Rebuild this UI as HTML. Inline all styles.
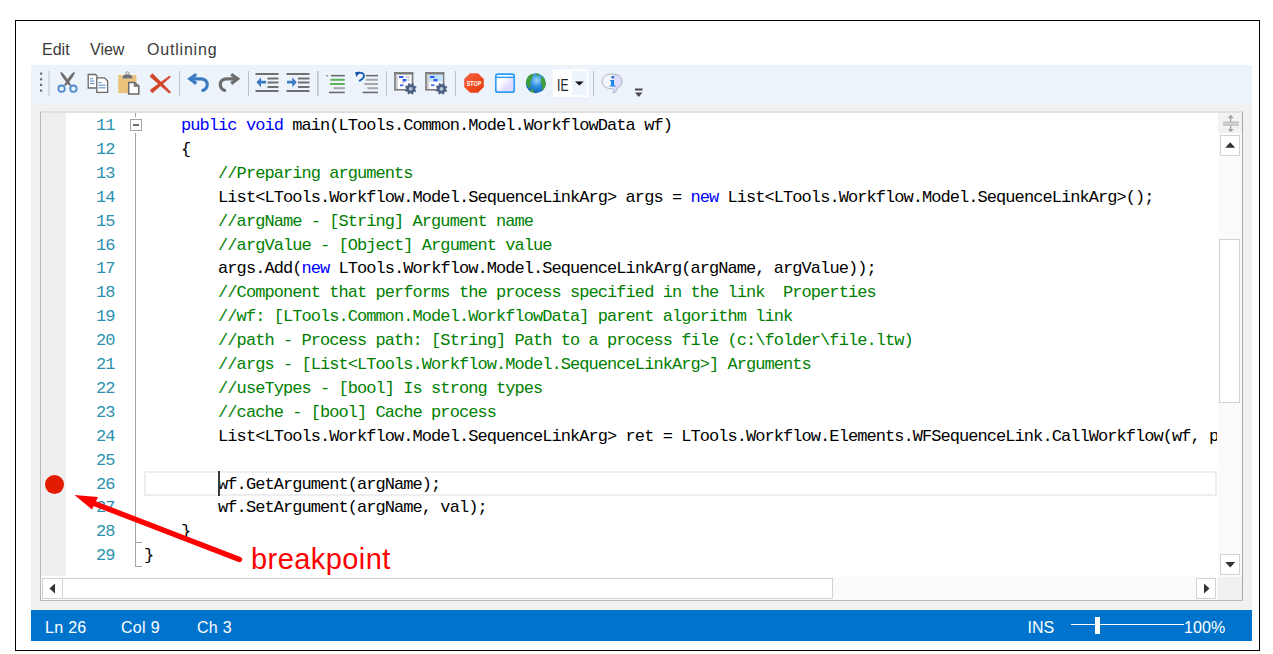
<!DOCTYPE html>
<html><head><meta charset="utf-8">
<style>
html,body{margin:0;padding:0;background:#fff;width:1273px;height:654px;overflow:hidden;position:relative;font-family:"Liberation Sans",sans-serif;}
.a{position:absolute;}
#frame{left:15px;top:20px;width:1245px;height:631px;box-sizing:border-box;border:1px solid #000;}
.menu{font-size:16px;color:#3a3a3a;top:41px;line-height:18px;}
#toolbar{left:31px;top:65px;width:1221px;height:38px;background:#edf3fb;}
#panel{left:31px;top:103px;width:1221px;height:507px;background:#f1f1f1;}
#status{left:31px;top:610px;width:1221px;height:31px;background:#0074cc;}
.st{color:#fff;font-size:16px;top:619px;line-height:18px;letter-spacing:0.3px;}
#editor{left:40px;top:111px;width:1203px;height:490px;box-sizing:border-box;background:#fff;border-style:solid;border-width:2px 1px 1px 1px;border-color:#e0e0e0 #a9a9a9 #bdbdbd #b8b8b8;}
#gutter{left:41px;top:113px;width:25px;height:463px;background:#efefef;}
.ln{font-family:"Liberation Mono",monospace;font-size:17px;letter-spacing:-0.94px;color:#2b91af;left:54px;width:19.5px;text-align:right;line-height:23.9px;white-space:pre;margin-top:1px;}
.code{font-family:"Liberation Mono",monospace;font-size:17px;letter-spacing:-0.94px;color:#000;left:103px;line-height:23.9px;white-space:pre;margin-top:1px;}
.k{color:#0000ff}.c{color:#008000}
.sbtn{background:#fff;box-sizing:border-box;border:1px solid #d2d2d2;}
.sep{width:1px;background:#b9c2cd;top:71px;height:25px;}
</style></head><body>
<div id="frame" class="a"></div>
<div class="a menu" style="left:42px">Edit</div>
<div class="a menu" style="left:90px">View</div>
<div class="a menu" style="left:147px;letter-spacing:0.8px">Outlining</div>
<div id="toolbar" class="a"></div>
<div id="panel" class="a"></div>
<div id="status" class="a"></div>
<div class="a st" style="left:45px">Ln 26</div>
<div class="a st" style="left:121px">Col 9</div>
<div class="a st" style="left:197px">Ch 3</div>
<div class="a st" style="left:1027.5px;letter-spacing:0">INS</div>
<div class="a st" style="left:1184px;letter-spacing:0.1px">100%</div>
<div class="a" style="left:1071px;top:624px;width:113px;height:1px;background:#fff"></div>
<div class="a" style="left:1095px;top:617px;width:5px;height:17px;background:#fff"></div>


<!-- toolbar icons -->
<svg class="a" style="left:0;top:0" width="700" height="110">
  <g fill="#707070">
    <rect x="40" y="72.5" width="2.2" height="2.2"/><rect x="40" y="78.2" width="2.2" height="2.2"/>
    <rect x="40" y="83.8" width="2.2" height="2.2"/><rect x="40" y="89.5" width="2.2" height="2.2"/>
  </g>
  <g fill="#bcc3cc">
    <rect x="48.5" y="71" width="1" height="25"/>
    <rect x="179" y="71" width="1" height="25"/>
    <rect x="248" y="71" width="1" height="25"/>
    <rect x="317" y="71" width="1.6" height="25"/>
    <rect x="386" y="71" width="1" height="25"/>
    <rect x="455" y="71" width="1" height="25"/>
    <rect x="593" y="71" width="1" height="25"/>
  </g>
  <!-- scissors -->
  <path d="M61,71.8 C62.8,72.6 65.8,76.5 68.8,81 L71.2,85 L69.2,85.8 L66.5,82.5 C64,79 61,75.5 60.4,73 Z" fill="#6e6e6e"/>
  <path d="M74.2,71.8 C72.4,72.6 69.4,76.5 66.4,81 L64,85 L66,85.8 L68.7,82.5 C71.2,79 74.2,75.5 74.8,73 Z" fill="#6e6e6e"/>
  <circle cx="61.6" cy="88.7" r="3.2" fill="none" stroke="#4f8acc" stroke-width="1.8"/>
  <circle cx="73.4" cy="88.7" r="3.2" fill="none" stroke="#4f8acc" stroke-width="1.8"/>
  <!-- copy -->
  <path d="M88.2,74.5 H95.5 L97,76 V88 H88.2 Z" fill="#fff" stroke="#6a6a6a" stroke-width="1.3"/>
  <path d="M96.8,77.8 H104.5 L107.6,81 V92.3 H96.8 Z" fill="#fff" stroke="#6a6a6a" stroke-width="1.3"/>
  <g fill="#6b9bd2"><rect x="90" y="78" width="3" height="1.2"/><rect x="90" y="80.5" width="4.5" height="1.2"/><rect x="90" y="83" width="4.5" height="1.2"/>
  <rect x="98.5" y="82" width="3" height="1.2"/><rect x="98.5" y="84.6" width="7" height="1.2"/><rect x="98.5" y="87.2" width="7" height="1.2"/></g>
  <!-- paste -->
  <rect x="118.2" y="75" width="18.2" height="18" fill="#ebc27c"/>
  <rect x="121.5" y="74.5" width="11.5" height="4.5" fill="#f4dcb0"/>
  <path d="M122.3,78.6 C122.3,75.5 124.5,74.6 127.5,74.6 C130.5,74.6 132.7,75.5 132.7,78.6 Z" fill="#6e6e6e"/>
  <circle cx="127.5" cy="73.4" r="1.6" fill="none" stroke="#8e8e8e" stroke-width="1"/>
  <path d="M128.7,82.5 H134.5 V86 H138.8 V94 H128.7 Z" fill="#fff" stroke="#666" stroke-width="1.5" stroke-linejoin="miter"/>
  <path d="M134.5,82.5 L138.8,86" stroke="#666" stroke-width="1.5"/>
  <!-- red X -->
  <polygon points="149.9,76.4 152.5,73.6 170.6,91.9 169.4,93.3" fill="#d4462c" stroke="#d4462c" stroke-width="0.6" stroke-linejoin="round"/>
  <polygon points="150.1,90.1 152.3,92.9 170.5,77.1 169.5,75.9" fill="#d4462c" stroke="#d4462c" stroke-width="0.6" stroke-linejoin="round"/>
  <!-- undo -->
  <g id="undo" fill="none" stroke="#3c7bc1" stroke-width="3.2">
  <path d="M196.3,74.3 L189.9,78.8 L196.3,83.6" stroke-linejoin="miter" stroke-linecap="butt"/>
  <path d="M190.5,78.8 H200.5 C205,78.8 207.2,81.4 207.2,84.4 C207.2,87.4 205.5,89.3 202.8,90.4" stroke-linecap="round"/>
  </g>
  <g transform="translate(427.5,0) scale(-1,1)" fill="none" stroke="#6e6e6e" stroke-width="3.2">
  <path d="M196.3,74.3 L189.9,78.8 L196.3,83.6" stroke-linejoin="miter" stroke-linecap="butt"/>
  <path d="M190.5,78.8 H200.5 C205,78.8 207.2,81.4 207.2,84.4 C207.2,87.4 205.5,89.3 202.8,90.4" stroke-linecap="round"/>
  </g>
  <!-- outdent -->
  <g fill="#707070">
    <rect x="255.5" y="73" width="23" height="2"/><rect x="267.5" y="77.5" width="11" height="2"/>
    <rect x="267.5" y="81.5" width="11" height="2"/><rect x="267.5" y="86" width="11" height="2"/>
    <rect x="255.5" y="90" width="23" height="2"/>
    <rect x="286.5" y="73" width="23" height="2"/><rect x="298" y="77.5" width="11.5" height="2"/>
    <rect x="298" y="81.5" width="11.5" height="2"/><rect x="298" y="86" width="11.5" height="2"/>
    <rect x="286.5" y="90" width="23" height="2"/>
  </g>
  <path d="M256.5,82.2 L261,77.2 L261,80.8 H266 V83.6 H261 V87.2 Z" fill="#3c7bc1"/>
  <path d="M296.8,82.2 L292.3,77.2 L292.3,80.8 H287 V83.6 H292.3 V87.2 Z" fill="#3c7bc1"/>
  <!-- comment -->
  <rect x="326.2" y="75.2" width="2" height="1.2" fill="#7a7a7a"/>
  <rect x="331" y="74.9" width="13.8" height="1.5" fill="#666"/>
  <rect x="330.5" y="78.8" width="14.3" height="2" fill="#5fb35f"/>
  <rect x="330" y="83" width="14.8" height="2" fill="#5fb35f"/>
  <rect x="333.5" y="87.2" width="11.3" height="2" fill="#a6a6a6"/>
  <rect x="329" y="91.7" width="15.8" height="1.5" fill="#666"/>
  <!-- uncomment -->
  <rect x="366" y="74.9" width="12" height="1.5" fill="#666"/>
  <rect x="366" y="78.8" width="12" height="2" fill="#a6a6a6"/>
  <rect x="364.3" y="83" width="13.7" height="2" fill="#a6a6a6"/>
  <rect x="367.5" y="87.2" width="10.5" height="2" fill="#a6a6a6"/>
  <rect x="362.7" y="91.7" width="15.3" height="1.5" fill="#666"/>
  <path d="M358,72.8 Q363.8,72 364,75.8 Q364,78.2 359.8,80.6" fill="none" stroke="#1f61b8" stroke-width="2" stroke-linecap="round"/>
  <polygon points="355.2,72 360,72.3 356.2,77" fill="#124fa8"/>
  <!-- window+gear 1 -->
  <rect x="395" y="73" width="17.5" height="16.8" fill="#fff" stroke="#7d7d7d" stroke-width="1.7"/>
  <rect x="394.2" y="72.2" width="19.1" height="2.4" fill="#7d7d7d"/>
  <rect x="396" y="74" width="2" height="15" fill="#d0d0d0"/>
  <g fill="#2d5cf0"><rect x="399" y="76" width="4.5" height="2"/><rect x="402.5" y="79" width="4" height="2.4"/><rect x="400" y="84.5" width="3.5" height="1.6"/></g>
  <g fill="#aaa"><rect x="405" y="76.5" width="5" height="1"/><rect x="407.5" y="79.5" width="2.5" height="1"/><rect x="402" y="82" width="3" height="0.8"/></g>
  <!-- window+gear 2 -->
  <rect x="426" y="73" width="17.5" height="16.8" fill="#fff" stroke="#7d7d7d" stroke-width="1.7"/>
  <rect x="425.2" y="72.2" width="19.1" height="2.4" fill="#7d7d7d"/>
  <rect x="427" y="74" width="2" height="15" fill="#d0d0d0"/>
  <rect x="429" y="75" width="13.5" height="6.5" fill="#bfe3fb"/>
  <g fill="#2d5cf0"><rect x="430" y="76" width="4.5" height="2"/><rect x="433.5" y="79" width="4" height="2.4"/><rect x="431" y="84.5" width="3.5" height="1.6"/></g>
  <path d="M415.01,89.67 L416.11,90.58 L415.55,91.80 L414.15,91.54 L413.13,92.47 L413.27,93.89 L412.01,94.35 L411.20,93.17 L409.83,93.11 L408.92,94.21 L407.70,93.65 L407.96,92.25 L407.03,91.23 L405.61,91.37 L405.15,90.11 L406.33,89.30 L406.39,87.93 L405.29,87.02 L405.85,85.80 L407.25,86.06 L408.27,85.13 L408.13,83.71 L409.39,83.25 L410.20,84.43 L411.57,84.49 L412.48,83.39 L413.70,83.95 L413.44,85.35 L414.37,86.37 L415.79,86.23 L416.25,87.49 L415.07,88.30 Z" fill="#4b5f84" stroke="#4b5f84" stroke-width="0.4" stroke-linejoin="round"/><circle cx="410.7" cy="88.8" r="1.9" fill="#b9c4d4"/>
  <path d="M445.81,89.67 L446.91,90.58 L446.35,91.80 L444.95,91.54 L443.93,92.47 L444.07,93.89 L442.81,94.35 L442.00,93.17 L440.63,93.11 L439.72,94.21 L438.50,93.65 L438.76,92.25 L437.83,91.23 L436.41,91.37 L435.95,90.11 L437.13,89.30 L437.19,87.93 L436.09,87.02 L436.65,85.80 L438.05,86.06 L439.07,85.13 L438.93,83.71 L440.19,83.25 L441.00,84.43 L442.37,84.49 L443.28,83.39 L444.50,83.95 L444.24,85.35 L445.17,86.37 L446.59,86.23 L447.05,87.49 L445.87,88.30 Z" fill="#4b5f84" stroke="#4b5f84" stroke-width="0.4" stroke-linejoin="round"/><circle cx="441.5" cy="88.8" r="1.9" fill="#b9c4d4"/>
  <!-- stop -->
  <defs><linearGradient id="sg" x1="0" y1="0" x2="1" y2="1"><stop offset="0" stop-color="#f7654a"/><stop offset="0.5" stop-color="#f04b20"/><stop offset="1" stop-color="#e03a12"/></linearGradient></defs>
  <polygon points="470,73.2 478,73.2 483.8,79 483.8,87 478,92.8 470,92.8 464.2,87 464.2,79" fill="url(#sg)"/>
  <text x="474" y="86.3" font-family="Liberation Sans" font-weight="bold" font-size="7.6" fill="#fff" text-anchor="middle" textLength="14.5" lengthAdjust="spacingAndGlyphs">STOP</text>
  <!-- window -->
  <defs><linearGradient id="wg" x1="0" y1="0" x2="1" y2="1"><stop offset="0.35" stop-color="#ffffff"/><stop offset="0.65" stop-color="#e4dcff"/></linearGradient>
  <radialGradient id="globe" cx="0.55" cy="0.35" r="0.75"><stop offset="0" stop-color="#9ad8ff"/><stop offset="0.45" stop-color="#2a8ce0"/><stop offset="1" stop-color="#1358a8"/></radialGradient></defs>
  <rect x="495.8" y="74.2" width="18.4" height="18" rx="2" fill="url(#wg)" stroke="#2e9df5" stroke-width="1.7"/>
  <rect x="496" y="76.6" width="18" height="1.5" fill="#2e9df5"/>
  <!-- globe -->
  <circle cx="535.8" cy="83.2" r="10" fill="url(#globe)"/>
  <path d="M527.2,78 C528.5,75.5 531,74 533.5,74.1 L533,76.3 C531.2,77.5 532.4,79.5 530.8,81.2 C529.6,83 531.4,85.6 529.6,88 C527.2,86.5 525.8,83.5 525.9,81 Z" fill="#3f9e3a"/>
  <path d="M541.5,76 C543.8,77.6 545.6,80.5 545.8,83.5 C545.6,86.6 544.2,89 542.6,90.6 C541.4,88.6 542.6,86 541.5,84 C540.4,82 542,79 540.4,77 Z" fill="#3f9e3a"/>
  <path d="M535.5,73.5 C537.3,73.4 538.8,73.9 540,74.6 L537.6,76.6 Z" fill="#3f9e3a"/>
  <path d="M531.5,89 C533.5,89.5 534.5,91 534,93 C532.5,92.8 531,92 530,91.2 Z" fill="#3f9e3a"/>
  <!-- combo -->
  <rect x="552.7" y="69.3" width="35.5" height="27.7" fill="#fff"/>
  <rect x="572" y="71" width="15" height="24.4" fill="#eef4fb"/>
  <text x="557" y="90.7" font-family="Liberation Sans" font-size="17" fill="#222" textLength="11.5" lengthAdjust="spacingAndGlyphs">IE</text>
  <polygon points="575,81.6 583.8,81.6 579.4,85.6" fill="#111"/>
  <!-- info bubble -->
  <defs><linearGradient id="ig" x1="0" y1="0" x2="1" y2="0"><stop offset="0.5" stop-color="#f4f6fb"/><stop offset="0.62" stop-color="#e1dbff"/></linearGradient></defs>
  <path d="M612,74 C618.5,74 622,77 622,81 C622,84.5 620,87 617,88.5 C617.5,90.5 615.5,92.5 613,93 C614.5,91.5 614.5,90 613.5,89 C606,89 602.2,85.5 602.2,81.5 C602.2,77 606,74 612,74 Z" fill="url(#ig)" stroke="#a9b3bd" stroke-width="1"/>
  <rect x="611.5" y="76" width="2.6" height="2.4" fill="#2c6cc8"/>
  <path d="M610,80 H614 V85.5 H615.5 V86.5 H609.5 V85.5 H611 V81 H610 Z" fill="#1e84e8"/>
  <!-- overflow -->
  <rect x="635" y="88.5" width="7.5" height="2" fill="#4a4352"/>
  <polygon points="635,92.5 642.5,92.5 638.75,97" fill="#4a4352"/>
</svg>

<div id="editor" class="a"></div>
<div id="gutter" class="a"></div>

<div id="lines" class="a" style="left:41px;top:113px;width:1176px;height:463px;overflow:hidden">
<div class="a ln" style="top:0.0px">11</div>
<div class="a code" style="top:0.0px">    <span class="k">public</span> <span class="k">void</span> main(LTools.Common.Model.WorkflowData wf)</div>
<div class="a ln" style="top:23.9px">12</div>
<div class="a code" style="top:23.9px">    {</div>
<div class="a ln" style="top:47.8px">13</div>
<div class="a code" style="top:47.8px">        <span class="c">//Preparing arguments</span></div>
<div class="a ln" style="top:71.7px">14</div>
<div class="a code" style="top:71.7px">        List&lt;LTools.Workflow.Model.SequenceLinkArg&gt; args = <span class="k">new</span> List&lt;LTools.Workflow.Model.SequenceLinkArg&gt;();</div>
<div class="a ln" style="top:95.6px">15</div>
<div class="a code" style="top:95.6px">        <span class="c">//argName - [String] Argument name</span></div>
<div class="a ln" style="top:119.5px">16</div>
<div class="a code" style="top:119.5px">        <span class="c">//argValue - [Object] Argument value</span></div>
<div class="a ln" style="top:143.4px">17</div>
<div class="a code" style="top:143.4px">        args.Add(<span class="k">new</span> LTools.Workflow.Model.SequenceLinkArg(argName, argValue));</div>
<div class="a ln" style="top:167.3px">18</div>
<div class="a code" style="top:167.3px">        <span class="c">//Component that performs the process specified in the link  Properties</span></div>
<div class="a ln" style="top:191.2px">19</div>
<div class="a code" style="top:191.2px">        <span class="c">//wf: [LTools.Common.Model.WorkflowData] parent algorithm link</span></div>
<div class="a ln" style="top:215.1px">20</div>
<div class="a code" style="top:215.1px">        <span class="c">//path - Process path: [String] Path to a process file (c:\folder\file.ltw)</span></div>
<div class="a ln" style="top:239.0px">21</div>
<div class="a code" style="top:239.0px">        <span class="c">//args - [List&lt;LTools.Workflow.Model.SequenceLinkArg&gt;] Arguments</span></div>
<div class="a ln" style="top:262.9px">22</div>
<div class="a code" style="top:262.9px">        <span class="c">//useTypes - [bool] Is strong types</span></div>
<div class="a ln" style="top:286.8px">23</div>
<div class="a code" style="top:286.8px">        <span class="c">//cache - [bool] Cache process</span></div>
<div class="a ln" style="top:310.7px">24</div>
<div class="a code" style="top:310.7px">        List&lt;LTools.Workflow.Model.SequenceLinkArg&gt; ret = LTools.Workflow.Elements.WFSequenceLink.CallWorkflow(wf, p</div>
<div class="a ln" style="top:334.6px">25</div>
<div class="a ln" style="top:358.5px">26</div>
<div class="a code" style="top:358.5px">        wf.GetArgument(argName);</div>
<div class="a ln" style="top:382.4px">27</div>
<div class="a code" style="top:382.4px">        wf.SetArgument(argName, val);</div>
<div class="a ln" style="top:406.3px">28</div>
<div class="a code" style="top:406.3px">    }</div>
<div class="a ln" style="top:430.2px">29</div>
<div class="a code" style="top:430.2px">}</div>

</div>

<!-- fold markers -->
<svg class="a" style="left:0;top:0" width="1273" height="654" shape-rendering="crispEdges">
  <g stroke="#a5a5a5" stroke-width="1" fill="none">
    <line x1="135.5" y1="113" x2="135.5" y2="117"/>
    <rect x="130.5" y="119.5" width="11" height="11" fill="#fff"/>
    <line x1="133" y1="125" x2="139" y2="125" stroke="#707070" stroke-width="2"/>
    <line x1="135.5" y1="133" x2="135.5" y2="566"/>
    <line x1="135" y1="542.5" x2="142" y2="542.5"/>
    <line x1="135" y1="566.5" x2="142" y2="566.5"/>
  </g>
</svg>
<!-- current line highlight -->
<div class="a" style="left:144px;top:471px;width:1073px;height:24.5px;box-sizing:border-box;border:2px solid #eeeeee"></div>
<div class="a" style="left:218px;top:471px;width:2px;height:25px;background:#3a3a3a"></div>
<!-- v scrollbar -->
<div class="a" style="left:1218px;top:113px;width:24px;height:464px;background:#fbfbfb"></div>
<div class="a" style="left:1218px;top:113px;width:24px;height:20px;background:#f2f2f2"></div>
<svg class="a" style="left:1218px;top:113px" width="24" height="20">
  <rect x="5" y="8.4" width="15.8" height="4.4" fill="#c2c2c2"/>
  <rect x="5" y="10.3" width="15.8" height="0.8" fill="#dedede"/>
  <g fill="#a3a3a3">
    <rect x="12" y="4.5" width="1.3" height="4"/><rect x="12" y="12.8" width="1.3" height="3.6"/>
    <polygon points="9.7,5.2 15.6,5.2 12.65,1.6"/><polygon points="9.7,16 15.6,16 12.65,19.2"/>
  </g>
</svg>
<div class="a sbtn" style="left:1220px;top:135px;width:20px;height:21px"></div>
<svg class="a" style="left:1220px;top:135px" width="20" height="21"><polygon points="5.2,12.7 15.2,12.7 10.2,7.2" fill="#333"/></svg>
<div class="a sbtn" style="left:1219px;top:239px;width:21px;height:164px"></div>
<div class="a sbtn" style="left:1220px;top:554px;width:20px;height:21px"></div>
<svg class="a" style="left:1220px;top:554px" width="20" height="21"><polygon points="5.2,8 15.2,8 10.2,13.5" fill="#333"/></svg>
<!-- corner -->
<div class="a" style="left:1218px;top:577px;width:24px;height:23px;background:#f0f0f0"></div>
<!-- h scrollbar -->
<div class="a" style="left:41px;top:577px;width:1177px;height:23px;background:#fbfbfb"></div>
<div class="a sbtn" style="left:42px;top:578px;width:21px;height:21px"></div>
<svg class="a" style="left:42px;top:578px" width="21" height="21"><polygon points="13,5.5 13,15.5 7.5,10.5" fill="#333"/></svg>
<div class="a sbtn" style="left:62px;top:578px;width:771px;height:21px"></div>
<div class="a sbtn" style="left:1196px;top:578px;width:20px;height:21px"></div>
<svg class="a" style="left:1196px;top:578px" width="20" height="21"><polygon points="8,5.5 8,15.5 13.5,10.5" fill="#333"/></svg>
<!-- breakpoint -->
<div class="a" style="left:45px;top:475px;width:19px;height:19px;border-radius:50%;background:#e31b00"></div>
<!-- arrow -->
<svg class="a" style="left:0;top:0" width="1273" height="654">
  <line x1="93" y1="503" x2="239.5" y2="559.5" stroke="#ff0000" stroke-width="5.4" stroke-linecap="round"/>
  <polygon points="74.5,495 98,497 92,509.5" fill="#ff0000"/>
</svg>
<div class="a" style="left:251px;top:541.5px;font-size:29px;line-height:34px;color:#ff0000;letter-spacing:0.43px">breakpoint</div>
</body></html>
